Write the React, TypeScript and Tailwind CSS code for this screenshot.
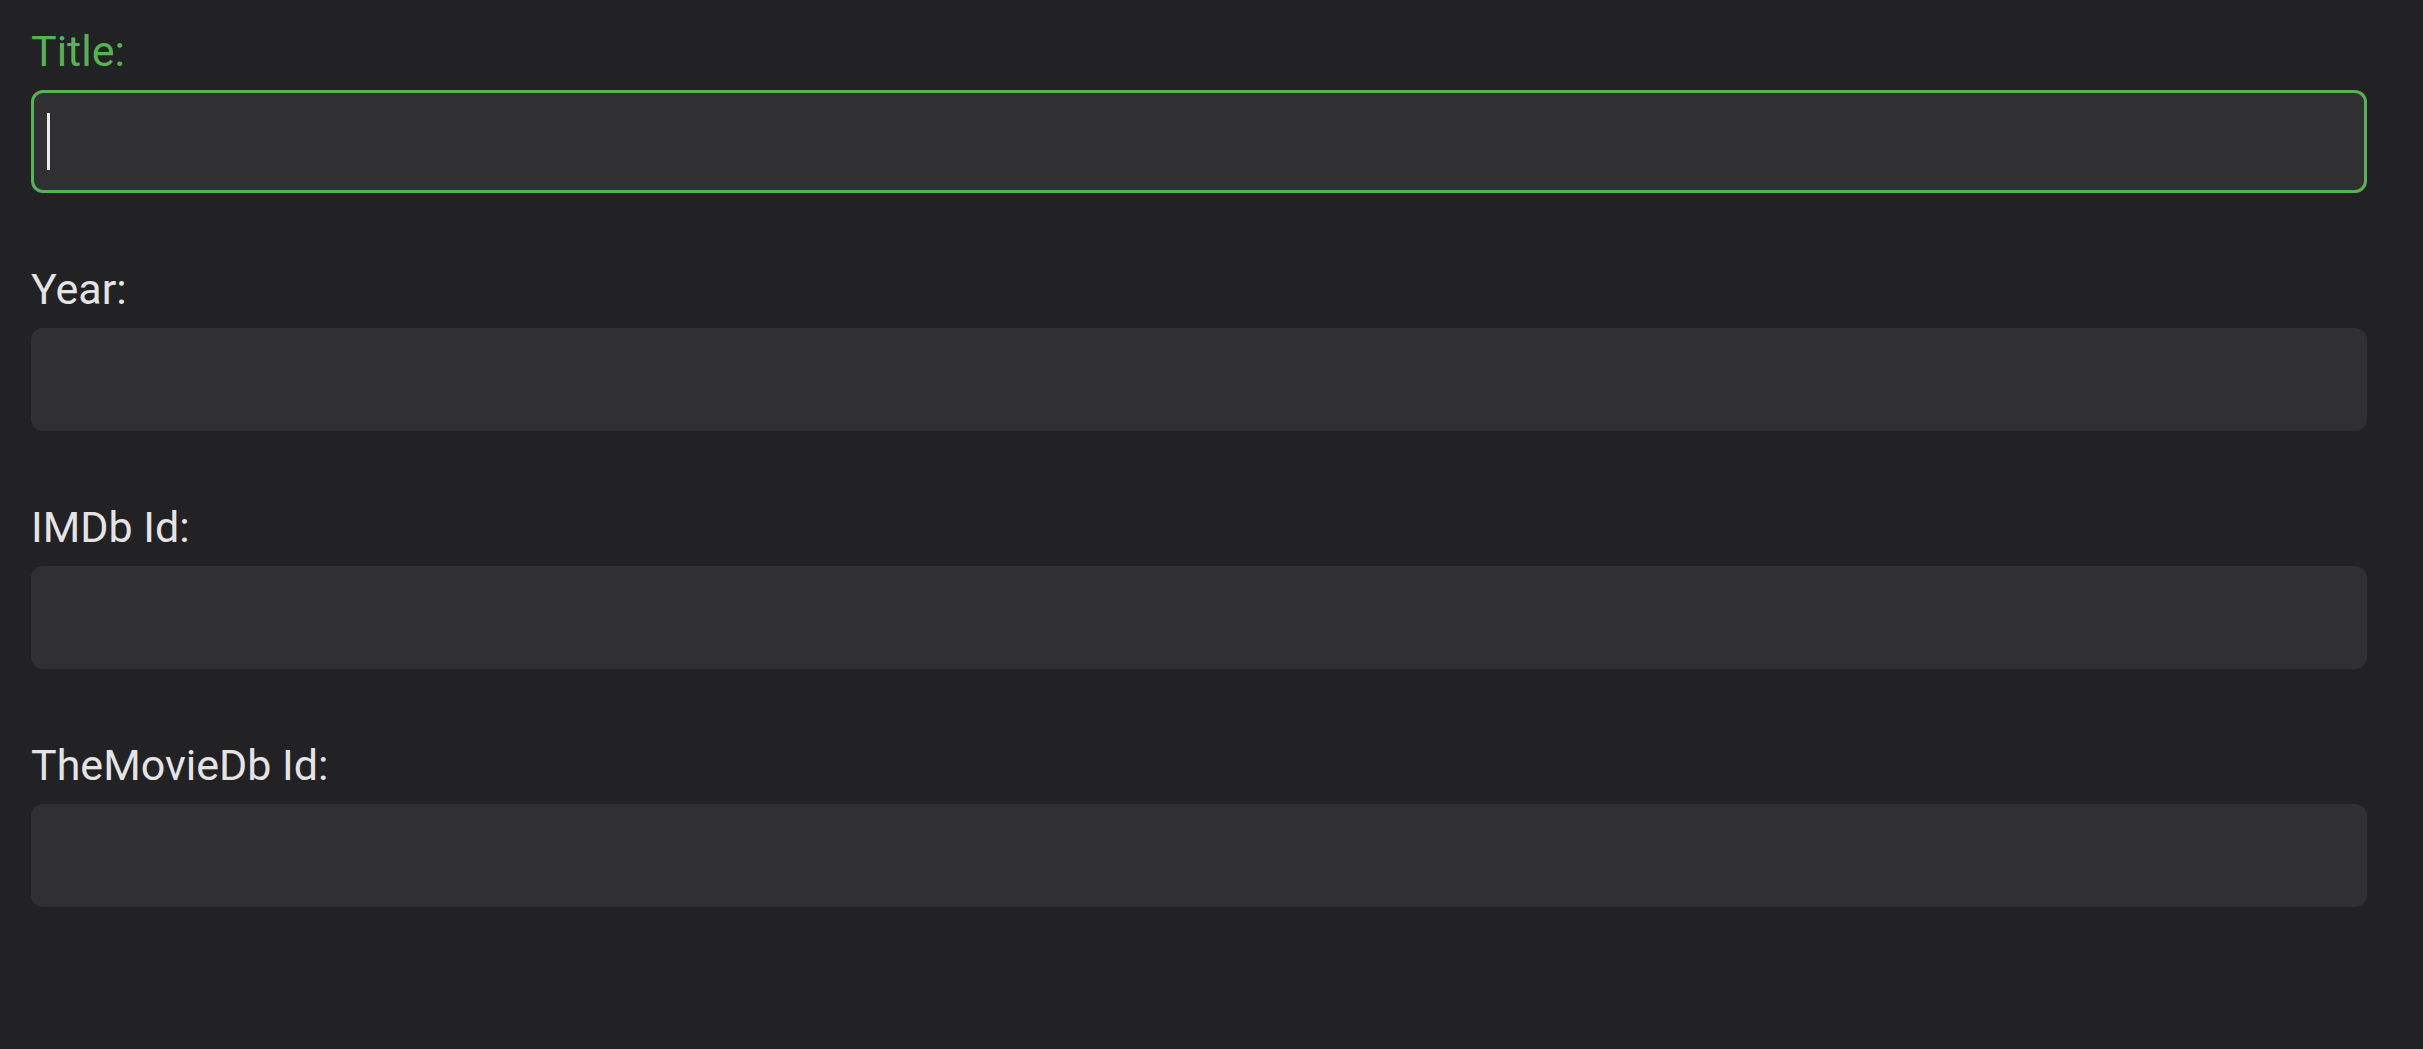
import React from "react";

const fields = ["Title:", "Year:", "IMDb Id:", "TheMovieDb Id:"];

export default function App() {
  return (
    <div
      className="min-h-[1049px] w-full bg-[#222124] pl-[31px] pt-[25px]"
      style={{ fontFamily: "Roboto, 'Noto Sans', Arial, sans-serif" }}
    >
      <div className="flex w-[2336px] flex-col gap-[70px]">
        {fields.map((f, i) => {
          const active = i === 0;
          return (
            <div key={f} className="flex flex-col">
              <label
                className={
                  "text-[43px] leading-[52px] " +
                  (active ? "text-[#57b255]" : "text-[#e4e4e6]")
                }
              >
                {f}
              </label>
              <div
                className={
                  "mt-[13px] flex h-[103px] items-center rounded-[12px] bg-[#302f32] " +
                  (active
                    ? "border-[3px] border-[#57b255] pl-[13px]"
                    : "border-0 pl-[16px]")
                }
              >
                {active && <div className="h-[57px] w-[3px] bg-[#ececec]" />}
              </div>
            </div>
          );
        })}
      </div>
    </div>
  );
}
